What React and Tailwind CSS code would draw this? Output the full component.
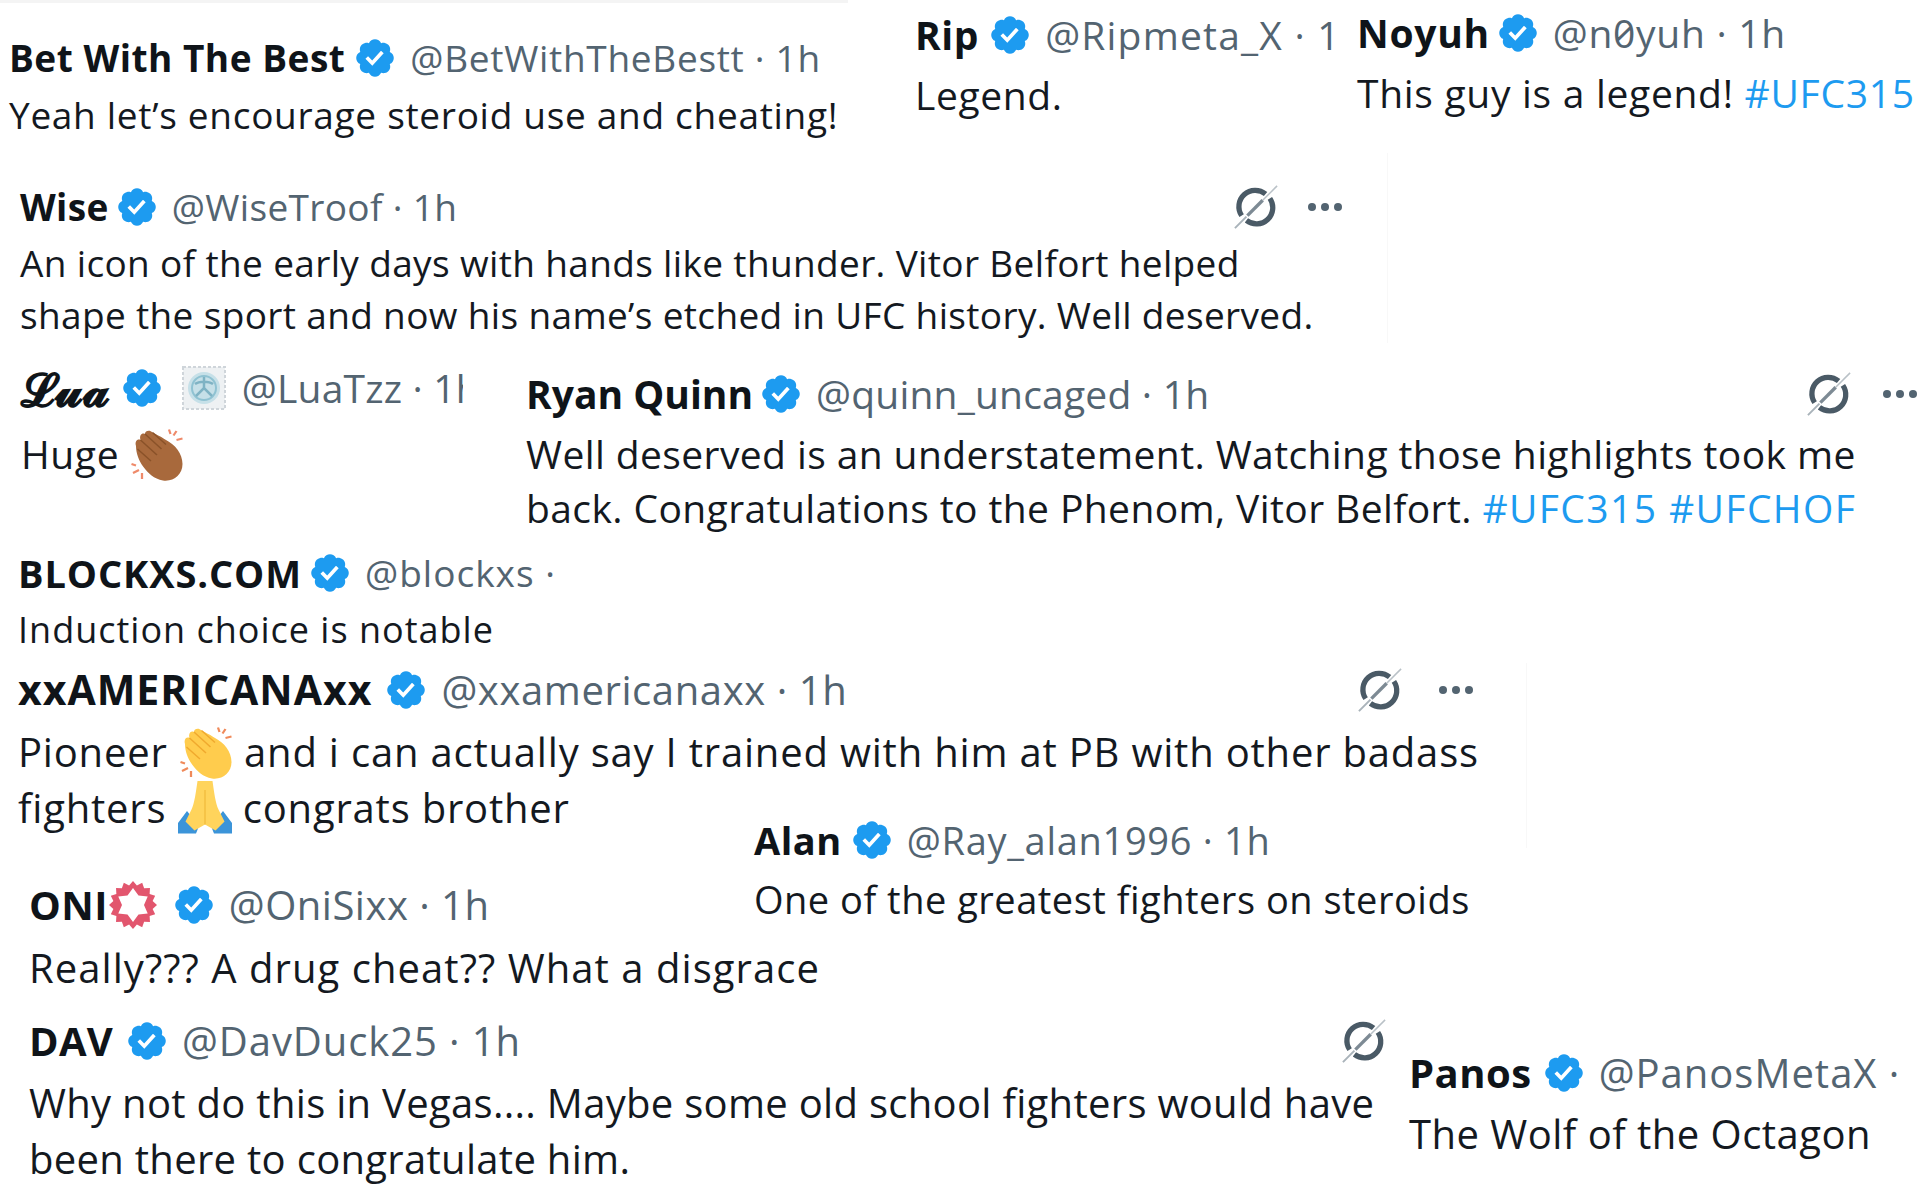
import React from "react";

const BADGE = "M20.396 11c-.018-.646-.215-1.275-.57-1.816-.354-.54-.852-.972-1.438-1.246.223-.607.27-1.264.14-1.897-.131-.634-.437-1.218-.882-1.687-.47-.445-1.053-.75-1.687-.882-.633-.13-1.29-.083-1.897.14-.273-.587-.704-1.086-1.245-1.44S11.647 1.62 11 1.604c-.646.017-1.273.213-1.813.568s-.969.854-1.24 1.44c-.608-.223-1.267-.272-1.902-.14-.635.13-1.22.436-1.69.882-.445.47-.749 1.055-.878 1.688-.13.633-.08 1.29.144 1.896-.587.274-1.087.705-1.443 1.245-.356.54-.555 1.17-.574 1.817.02.647.218 1.276.574 1.817.356.54.856.972 1.443 1.245-.224.606-.274 1.263-.144 1.896.13.634.433 1.218.877 1.688.47.443 1.054.747 1.687.878.633.132 1.29.084 1.897-.136.274.586.705 1.084 1.246 1.439.54.354 1.17.551 1.816.569.647-.016 1.276-.213 1.817-.567s.972-.854 1.245-1.44c.604.239 1.266.296 1.903.164.636-.132 1.22-.447 1.68-.907.46-.46.776-1.044.908-1.681s.075-1.299-.165-1.903c.586-.274 1.084-.705 1.439-1.246.354-.54.551-1.17.569-1.816zM9.662 14.85l-3.429-3.428 1.293-1.302 2.072 2.072 4.4-4.794 1.347 1.246z";

function Badge() {
  return (
    <svg viewBox="0 0 22 22" className="w-[44px] h-[44px] shrink-0 ml-[6px] mr-[13px]">
      <path d={BADGE} fill="#1d9bf0" />
    </svg>
  );
}

function Grok() {
  return (
    <svg viewBox="0 0 48 48" className="w-[46px] h-[46px] shrink-0" fill="none">
      <path d="M34 10.500 A17 17 0 0 0 9 33" stroke="#4a5a66" strokeWidth="5.500" />
      <path d="M14 38 A17 17 0 0 0 38.500 15" stroke="#4a5a66" strokeWidth="5.500" />
      <path d="M2 46 L14 34" stroke="#a9b3ba" strokeWidth="2" />
      <path d="M15 33 L31 17" stroke="#7d8a94" strokeWidth="3.500" />
      <path d="M31 17 L46 2" stroke="#b9c1c7" strokeWidth="1.600" />
    </svg>
  );
}

function Dots() {
  return (
    <svg viewBox="0 0 36 10" className="w-[36px] h-[10px] shrink-0" fill="#536471">
      <circle cx="5" cy="5" r="4" />
      <circle cx="18" cy="5" r="4" />
      <circle cx="31" cy="5" r="4" />
    </svg>
  );
}

function Clap({ skin, dark, rays }) {
  return (
    <svg viewBox="0 0 36 36" className="inline-block w-[54px] h-[54px] align-[-13px]" fill="none">
      <path d="M4 12C3 9 5 7 7 8C6 5 8 3 10 4C10 2 13 1 15 3C19 5 21 6 24 8C30 11 35 17 35 24C35 31 29 36 22 35C16 34 12 30 9 26C6 22 4 17 4 12Z" fill={skin} />
      <path d="M7 8L18 18M10 4L21 14M15 3L24 11M5 14L14 22" stroke={dark} strokeWidth="1" />
      <path d="M26 1L27 4M31 2L29 5M35 7L31 8M1 24L4 25M2 30L6 28M8 34L8 30" stroke={rays} strokeWidth="1.500" />
    </svg>
  );
}

function Pray() {
  return (
    <svg viewBox="0 0 36 36" className="inline-block w-[54px] h-[54px] align-[-12px]">
      <path d="M0 35V28L6 20L14 30L12 35Z M36 35V28L30 20L22 30L24 35Z" fill="#3b94d9" />
      <path d="M13 0H23C24 7 25 15 27 19L31 27L25 33L18 29L11 33L5 27L9 19C11 15 12 7 13 0Z" fill="#ffd45c" />
      <path d="M18 6V29" stroke="#f0b93a" strokeWidth="0.800" />
    </svg>
  );
}

function OniStar() {
  const pts = Array.from({ length: 32 }, (_, i) => {
    const r = i % 2 ? 20 : 24;
    const a = (i * Math.PI) / 16;
    return `${24 + r * Math.sin(a)},${24 - r * Math.cos(a)}`;
  }).join(" ");
  const inner = Array.from({ length: 12 }, (_, i) => {
    const r = i % 2 ? 11 : 17;
    const a = (i * Math.PI) / 6;
    return `${24 + r * Math.sin(a)},${24 - r * Math.cos(a)}`;
  }).join(" ");
  return (
    <svg viewBox="0 0 48 48" className="w-[48px] h-[48px] shrink-0 ml-[1px] mr-[9px]">
      <polygon points={pts} fill="#e2566e" />
      <polygon points={inner} fill="#ffffff" />
    </svg>
  );
}

function Tile() {
  return (
    <svg viewBox="0 0 44 44" className="w-[44px] h-[44px] shrink-0 ml-[5px] mr-[16px]" fill="none">
      <rect x="1" y="1" width="42" height="42" fill="#eef1f3" stroke="#cfd5da" strokeWidth="2" strokeDasharray="3 2" />
      <circle cx="22" cy="22" r="16" fill="#c6e0e8" />
      <circle cx="22" cy="22" r="12" stroke="#8fc2d2" strokeWidth="2" />
      <path d="M22 11V22M14 30L22 22L30 30M13 18C17 15 27 15 31 18" stroke="#7fb3c4" strokeWidth="2.500" />
    </svg>
  );
}

function Head({ name, handle, nameCls, handleCls, after, children, icons }) {
  return (
    <div className="flex items-center h-[48px] whitespace-nowrap">
      <span className={`font-bold text-[#0f1419] ${nameCls || ""}`}>{name}</span>
      {after}
      <Badge />
      {children}
      <span className={`text-[#536471] font-normal ${handleCls || ""}`}>{handle}</span>
      {icons}
    </div>
  );
}

const Blue = ({ children, cls }) => <span className={`text-[#1d9bf0] ${cls || ""}`}>{children}</span>;

export default function App() {
  return (
    <div className="w-[1920px] h-[1200px] bg-white overflow-hidden font-['Open_Sans',sans-serif] text-[#14191f]">
      <div className="h-[3px] w-[848px] bg-[#f4f4f4]" />

      <div className="flex h-[147px] items-start">
        <div className="w-[915px] pl-[9px] pt-[31px] text-[37px] tracking-[0.7px]">
          <Head name="Bet With The Best" nameCls="tracking-[0.5px] pr-[2px]" handle="@BetWithTheBestt · 1h" />
          <p className="mt-[6px] leading-[54px] whitespace-nowrap">Yeah let’s encourage steroid use and cheating!</p>
        </div>
        <div className="w-[442px] overflow-hidden pt-[8px] text-[39px] tracking-[0.6px]">
          <Head name="Rip" nameCls="pr-[3px]" handleCls="tracking-[1.2px]" handle="@Ripmeta_X · 1" />
          <p className="mt-[9px] leading-[54px]">Legend.</p>
        </div>
        <div className="pt-[6px] text-[39px] tracking-[0.7px]">
          <Head name="Noyuh" handleCls="slashed-zero" handle="@n0yuh · 1h" />
          <p className="mt-[9px] leading-[54px] whitespace-nowrap">This guy is a legend! <Blue>#UFC315</Blue></p>
        </div>
      </div>

      <div className="h-[200px]">
        <div className="w-[1388px] h-[190px] mt-[3px] pt-[30px] pl-[20px] border-r border-[#f8f8f8] text-[37px] tracking-[0.35px]">
          <div className="w-[1323px]">
            <Head name="Wise" handle="@WiseTroof · 1h" icons={<div className="ml-auto flex items-center gap-[28px]"><Grok /><Dots /></div>} />
          </div>
          <p className="mt-[6px] leading-[52px] whitespace-nowrap">An icon of the early days with hands like thunder. Vitor Belfort helped<br />shape the sport and now his name’s etched in UFC history. Well deserved.</p>
        </div>
      </div>

      <div className="flex h-[190px] items-start">
        <div className="w-[463px] overflow-hidden pl-[21px] pt-[11px] text-[39px] tracking-[0.6px]">
          <Head name="𝓛𝓾𝓪" nameCls="text-[46px] pr-[3px]" handleCls="tracking-[0.2px]" handle="@LuaTzz · 1h"><Tile /></Head>
          <p className="mt-[15px] leading-[54px] whitespace-nowrap">Huge <Clap skin="#a8693c" dark="#8a5229" rays="#ef8a6a" /></p>
        </div>
        <div className="pl-[63px] pt-[17px] text-[39px] tracking-[0.4px]">
          <div className="w-[1392px]">
            <Head name="Ryan Quinn" nameCls="tracking-[0px]" handleCls="tracking-[0.2px]" handle="@quinn_uncaged · 1h" icons={<div className="ml-auto flex items-center gap-[30px]"><Grok /><Dots /></div>} />
          </div>
          <p className="mt-[9px] leading-[54px] whitespace-nowrap">Well deserved is an understatement. Watching those highlights took me<br />back. Congratulations to the Phenom, Vitor Belfort. <Blue cls="tracking-[1.4px]">#UFC315 #UFCHOF</Blue></p>
        </div>
      </div>

      <div className="h-[120px] pl-[18px] pt-[6px] text-[36px] tracking-[1px]">
        <Head name="BLOCKXS.COM" nameCls="text-[38px] tracking-[0.9px]" handleCls="text-[37px]" handle="@blockxs ·" />
        <p className="mt-[6px] leading-[54px]">Induction choice is notable</p>
      </div>

      <div className="h-[185px] w-[1527px] pl-[18px] pt-[3px] border-r border-[#f8f8f8] text-[40px] tracking-[0.8px]">
        <div className="w-[1456px]">
          <Head name="xxAMERICANAxx" nameCls="text-[41px] tracking-[1px] pr-[6px]" handleCls="tracking-[0.6px]" handle="@xxamericanaxx · 1h" icons={<div className="ml-auto flex items-center gap-[35px]"><Grok /><Dots /></div>} />
        </div>
        <p className="mt-[10px] leading-[56px] whitespace-nowrap">Pioneer <Clap skin="#ffcc4d" dark="#f0a92e" rays="#f08a5a" /> and i can actually say I trained with him at PB with other badass<br />fighters <Pray /> congrats brother</p>
      </div>

      <div className="flex h-[150px] items-start">
        <div className="w-[754px] pl-[29px] pt-[33px] text-[40px] tracking-[1.05px]">
          <Head name="ONI" nameCls="tracking-[0.4px]" handleCls="tracking-[0.5px]" handle="@OniSixx · 1h" after={<OniStar />} />
          <p className="mt-[12px] leading-[54px] whitespace-nowrap">Really??? A drug cheat?? What a disgrace</p>
        </div>
        <div className="-mt-[32px] text-[38px] tracking-[0.5px]">
          <Head name="Alan" nameCls="pr-[2px]" handleCls="tracking-[0.7px]" handle="@Ray_alan1996 · 1h" />
          <p className="mt-[8px] leading-[54px] whitespace-nowrap">One of the greatest fighters on steroids</p>
        </div>
      </div>

      <div className="flex items-start">
        <div className="w-[1409px] pl-[29px] pt-[19px] text-[40px] tracking-[0.3px]">
          <div className="w-[1358px]">
            <Head name="DAV" nameCls="pr-[6px]" handleCls="tracking-[0.9px]" handle="@DavDuck25 · 1h" icons={<div className="ml-auto flex items-center"><Grok /></div>} />
          </div>
          <p className="mt-[10px] leading-[56px] whitespace-nowrap">Why not do this in Vegas.... Maybe some old school fighters would have<br />been there to congratulate him.</p>
        </div>
        <div className="pt-[51px] text-[40px] tracking-[0.48px]">
          <Head name="Panos" nameCls="pr-[4px]" handleCls="tracking-[1px]" handle="@PanosMetaX ·" />
          <p className="mt-[10px] leading-[54px] whitespace-nowrap">The Wolf of the Octagon</p>
        </div>
      </div>
    </div>
  );
}
